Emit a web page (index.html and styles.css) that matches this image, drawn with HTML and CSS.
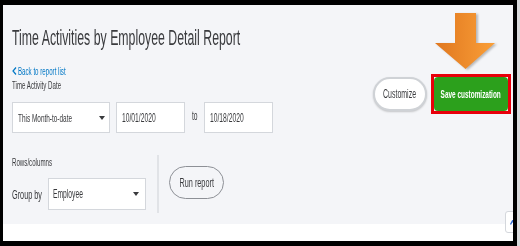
FILE: index.html
```html
<!DOCTYPE html>
<html lang="en">
<head>
    <meta charset="UTF-8">
    <title>Time Activities by Employee Detail Report</title>
    <link rel="stylesheet" href="styles.css">
</head>
<body>
    <div class="screen">
        <!-- annotation arrow over the page -->
        <svg class="arrow" width="60" height="56" viewBox="0 0 60 56">
            <defs>
                <linearGradient id="og" x1="0" x2="1" y1="0" y2="0">
                    <stop offset="0" stop-color="#e0771f"/>
                    <stop offset="1" stop-color="#fa9f38"/>
                </linearGradient>
            </defs>
            <path d="M20 0H41V30H60L30.5 56L0 30H20Z" fill="url(#og)"/>
        </svg>

        <div class="header">
            <div class="top">
                <div class="left">
                    <h1 class="title"><span class="nx">Time Activities by Employee Detail Report</span></h1>
                    <a class="back" href="#">
                        <svg width="5" height="8" viewBox="0 0 5 8"><path d="M4 0.5L1 4L4 7.5" fill="none" stroke="#0077c5" stroke-width="1.2"/></svg>
                        <span class="nx fix">Back to report list</span>
                    </a>
                    <div class="label"><span class="nx fix">Time Activity Date</span></div>
                    <div class="controls">
                        <div class="box range"><span class="nx fix">This Month-to-date</span><i class="caret"></i></div>
                        <div class="box date"><span class="nx fix">10/01/2020</span></div>
                        <span class="to"><span class="nx fix">to</span></span>
                        <div class="box date"><span class="nx fix">10/18/2020</span></div>
                    </div>
                </div>
                <div class="actions">
                    <button class="customize"><span class="nxc">Customize</span></button>
                    <div class="highlight">
                        <button class="save"><span class="nxc">Save customization</span></button>
                    </div>
                </div>
            </div>

            <div class="rows">
                <div class="rows-left">
                    <div class="label"><span class="nx fix">Rows/columns</span></div>
                    <div class="group">
                        <div class="group-label"><span class="nx fix">Group by</span></div>
                        <div class="box employee"><span class="nx fix">Employee</span><i class="caret"></i></div>
                    </div>
                </div>
                <div class="rows-right">
                    <button class="run"><span class="nxc">Run report</span></button>
                </div>
            </div>
        </div>

        <div class="footer"></div>

        <div class="totop">
            <svg width="5" height="5" viewBox="0 0 5 5"><path d="M0.5 4.5L2.5 0.8L4.5 4.5" fill="none" stroke="#2f6bd3" stroke-width="1.3"/></svg>
        </div>
    </div>
</body>
</html>
```

FILE: styles.css
```css
* {
    box-sizing: border-box;
}

body {
    margin: 0;
    padding: 5px 0 0 3px;
    height: 246px;
    background: #000;
    border-right: 3px solid #d9dadc;
    font-family: "Liberation Sans", Arial, sans-serif;
    color: #393a3d;
}

.screen {
    position: relative;
    width: 510px;
    height: 236px;
    overflow: hidden;
    background: #fff;
}

/* narrow text: the screenshot is squeezed sideways */
.nx {
    display: inline-block;
    white-space: nowrap;
    transform: scaleX(0.56);
    transform-origin: 0 50%;
}

.nx.fix {
    width: 0;
}

.nxc {
    display: inline-block;
    white-space: nowrap;
    transform: scaleX(0.56);
    transform-origin: 50% 50%;
}

/* Header area */
.header {
    background: #f4f5f8;
    padding: 20px 2px 11px 9px;
}

.top {
    display: flex;
    justify-content: space-between;
}

.left {
    flex: 1;
    min-width: 0;
}

.title {
    margin: 0 0 13px;
    font-size: 22px;
    line-height: 26px;
    font-weight: normal;
    color: #3a3b3e;
}

.back {
    display: flex;
    align-items: center;
    height: 14px;
    font-size: 11px;
    line-height: 14px;
    color: #0077c5;
    text-decoration: none;
}

.back svg {
    margin-right: 1px;
}

.label {
    height: 14px;
    font-size: 11px;
    line-height: 14px;
}

.controls {
    display: flex;
    align-items: center;
    margin-top: 10px;
    height: 31px;
}

.box {
    display: flex;
    align-items: center;
    height: 31px;
    padding-left: 5px;
    background: #fff;
    border: 1px solid #d4d7dc;
    font-size: 11.5px;
}

.range {
    width: 98px;
    margin-right: 6px;
}

.date {
    width: 69px;
    font-size: 12px;
}

.to {
    width: 19px;
    padding-left: 7px;
    font-size: 12px;
    margin-top: -3px;
}

.caret {
    margin-left: auto;
    margin-right: 4px;
    border-left: 3px solid transparent;
    border-right: 3px solid transparent;
    border-top: 4px solid #393a3d;
}

/* Buttons */
button {
    font-family: inherit;
    padding: 0;
    cursor: pointer;
    display: flex;
    align-items: center;
    justify-content: center;
}

.actions {
    display: flex;
    flex-shrink: 0;
    align-items: center;
    gap: 4px;
    height: 40px;
    margin-top: 49px;
}

.customize {
    width: 54px;
    height: 34px;
    background: #fff;
    border: 2px solid #cfd2d6;
    border-radius: 17px;
    box-shadow: 0 1px 2px rgba(0, 0, 0, 0.2);
    font-size: 12.5px;
    color: #393a3d;
}

.highlight {
    border: 3px solid #e8000b;
}

.save {
    width: 74px;
    height: 34px;
    border: none;
    border-radius: 4px;
    background: #2ca01c;
    color: #fff;
    font-size: 11.5px;
    font-weight: bold;
}

/* Rows/columns */
.rows {
    display: flex;
    margin-top: 22px;
}

.rows-left {
    width: 145px;
    padding-bottom: 3px;
}

.group {
    display: flex;
    align-items: center;
    margin-top: 9px;
}

.group-label {
    width: 36px;
    font-size: 13px;
}

.employee {
    width: 98px;
    height: 32px;
    padding-left: 4px;
    font-size: 12px;
}

.employee .caret {
    margin-right: 6px;
}

.rows-right {
    border-left: 2px solid #e1e3e7;
    padding: 11px 0 0 10px;
}

.run {
    width: 55px;
    height: 33px;
    background: transparent;
    border: 1px solid #8d9096;
    border-radius: 17px;
    font-size: 13px;
    color: #393a3d;
}

.footer {
    height: 17px;
    background: #fff;
}

/* overlays */
.arrow {
    position: absolute;
    left: 432px;
    top: 8px;
    filter: drop-shadow(2px 1px 1px rgba(0, 0, 0, 0.25));
}

.totop {
    position: absolute;
    left: 502px;
    top: 206px;
    width: 16px;
    height: 22px;
    padding: 8px 0 0 4px;
    background: #fff;
    border: 1px solid #d4d7dc;
    border-radius: 3px 0 0 3px;
}

.totop svg {
    display: block;
}
```
